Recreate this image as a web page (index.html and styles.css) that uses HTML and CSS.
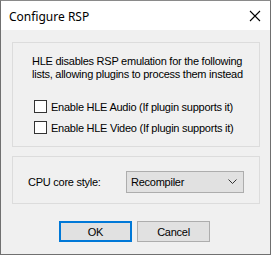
FILE: index.html
```html
<!DOCTYPE html>
<html>
<head>
<meta charset="utf-8">
<link rel="stylesheet" href="styles.css">
</head>
<body>
<div class="window">
  <div class="titlebar">
    <span class="title">Configure RSP</span>
    <svg class="close" width="12" height="12" viewBox="0 0 12 12"><path d="M1 1 L11 11 M11 1 L1 11" stroke="#000" stroke-width="1.1" fill="none"/></svg>
  </div>
  <div class="content">
    <div class="group group-hle">
      <p class="desc">HLE disables RSP emulation for the following<br>lists, allowing plugins to process them instead</p>
      <label class="check first"><span class="box"></span><span>Enable HLE Audio (If plugin supports it)</span></label>
      <label class="check"><span class="box"></span><span>Enable HLE Video (If plugin supports it)</span></label>
    </div>
    <div class="group group-cpu">
      <span class="cpu-label">CPU core style:</span>
      <div class="combo"><span>Recompiler</span>
        <svg class="chev" width="9" height="6" viewBox="0 0 9 6"><path d="M0.5 0.5 L4.5 4.5 L8.5 0.5" stroke="#333" stroke-width="1" fill="none"/></svg>
      </div>
    </div>
    <div class="buttons">
      <div class="btn default">OK</div>
      <div class="btn">Cancel</div>
    </div>
  </div>
</div>
</body>
</html>
```
FILE: styles.css
```css
html, body { margin: 0; padding: 0; background: #ffffff; }
.window {
  width: 271px; height: 255px; box-sizing: border-box;
  border: 1px solid #707070; border-top-color: #8a8a8a;
  background: #f0f0f0;
  font-family: "Liberation Sans", Arial, sans-serif;
  font-size: 11px; color: #000; letter-spacing: -0.25px;
}
.titlebar {
  height: 29px; background: #fff; display: flex; align-items: center;
  justify-content: space-between; padding: 0 9px 0 8px;
}
.title { font-family: "Noto Sans", "Open Sans", sans-serif; font-size: 12px; margin-top: 1px; letter-spacing: 0; }
.close { display: block; margin-top: 0px; }
.content { padding: 12px 10px 0 11px; }
.group { border: 1px solid #dcdcdc; box-sizing: border-box; }
.group-hle { height: 105px; padding: 12px 0 0 19px; }
.desc { margin: 0; line-height: 13px; }
.check { display: flex; align-items: center; margin-left: 2px; margin-top: 8px; height: 13px; }
.check.first { margin-top: 19px; }
.box { width: 13px; height: 13px; box-sizing: border-box; border: 1px solid #333; background: #fff; margin-right: 4px; }
.group-cpu { height: 48px; margin-top: 9px; padding: 14px 0 0 15px; display: flex; align-items: flex-start; }
.cpu-label { width: 98px; line-height: 22px; }
.combo {
  width: 118px; height: 22px; box-sizing: border-box; border: 1px solid #adadad;
  background: #e1e1e1; display: flex; align-items: center; justify-content: space-between;
  padding: 0 6px 0 4px;
}
.chev { display: block; }
.buttons { display: flex; gap: 5px; margin-top: 17px; padding-left: 47px; }
.btn {
  width: 73px; height: 21px; box-sizing: border-box; border: 1px solid #adadad;
  background: #e1e1e1; display: flex; align-items: center; justify-content: center;
}
.btn.default { border: 2px solid #0078d7; }
```
